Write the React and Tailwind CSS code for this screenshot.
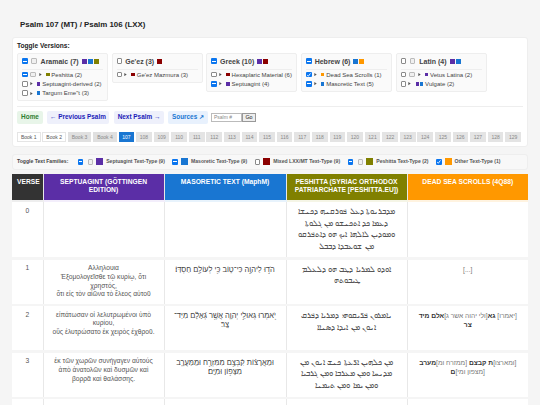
import React from "react";

const PURPLE = "#5b2ea6";
const BLUE = "#1976d2";
const OLIVE = "#808000";
const ORANGE = "#ff9800";
const RED = "#8b0000";

function Check({ state }) {
  if (state === "mixed") {
    return (
      <span className="flex h-[5.6px] w-[5.6px] shrink-0 items-center justify-center rounded-[1px] bg-[#0b76ef]">
        <span className="h-px w-[3.6px] bg-white" />
      </span>
    );
  }
  if (state === "on") {
    return (
      <span className="flex h-[5.6px] w-[5.6px] shrink-0 items-center justify-center rounded-[1px] bg-[#0b76ef]">
        <svg viewBox="0 0 10 10" className="h-[5.6px] w-[5.6px]">
          <path d="M2 5.5 L4.2 7.5 L8 2.5" fill="none" stroke="#fff" strokeWidth="1.6" />
        </svg>
      </span>
    );
  }
  return <span className="h-[5.6px] w-[5.6px] shrink-0 rounded-[1px] border-[0.7px] border-[#8a8a8a] bg-white" />;
}

function GhostBox({ className }) {
  return <span className={`h-[5.6px] w-[5.6px] shrink-0 rounded-[1px] border-[0.7px] border-[#bbbbbb] bg-[#f0f0f0] ${className}`} />;
}

function VersionRow({ check, ghost, colors, label }) {
  return (
    <div className="flex h-[9.3px] items-center whitespace-nowrap">
      <Check state={check} />
      {ghost && <GhostBox className="ml-[2.6px] mr-[1px]" />}
      <svg viewBox="0 0 3 4" className="ml-[2px] mr-[4.2px] h-[3.2px] w-[3px] shrink-0">
        <path d="M0 0 L3 2 L0 4 Z" fill="#555" />
      </svg>
      <span className="flex gap-[0.6px]">
        {colors.map((c) => (
          <span key={c} className="h-[3.6px] w-[3.6px] shrink-0" style={{ backgroundColor: c }} />
        ))}
      </span>
      <span className="ml-[1.8px] text-[6px] font-medium leading-none text-[#444]">{label}</span>
    </div>
  );
}

function VersionCard({ check, ghost, title, colors, rows }) {
  return (
    <div className="w-[91px] rounded-[2px] border border-[#eeeeee] bg-[#fafafa] px-[4px] pb-[2.6px] pt-[2.5px]">
      <div className="flex h-[9px] items-center whitespace-nowrap">
        <Check state={check} />
        {ghost && <GhostBox className="ml-[3.4px] mr-[1px]" />}
        <span className="ml-[3px] text-[7px] font-bold leading-none text-[#444]">{title}</span>
        <span className="ml-[3px] flex items-center gap-[1px]">
          {colors.map((c) => (
            <span key={c} className="h-[5px] w-[5px] shrink-0" style={{ backgroundColor: c }} />
          ))}
        </span>
      </div>
      <div className="mt-[3px] border-t border-[#eeeeee] pt-[0.5px]">
        {rows.map((r) => (
          <VersionRow key={r.label} {...r} />
        ))}
      </div>
    </div>
  );
}

const cards = [
  {
    check: "mixed", ghost: true, title: "Aramaic (7)", colors: [PURPLE, BLUE, OLIVE],
    rows: [
      { check: "mixed", ghost: true, colors: [OLIVE], label: "Peshitta (2)" },
      { check: "off", colors: [PURPLE], label: "Septuagint-derived (2)" },
      { check: "off", colors: [BLUE], label: "Targum Eme\"t (3)" },
    ],
  },
  {
    check: "off", title: "Ge'ez (3)", colors: [RED],
    rows: [{ check: "off", colors: [RED], label: "Ge'ez Mazmura (3)" }],
  },
  {
    check: "mixed", title: "Greek (10)", colors: [PURPLE, RED],
    rows: [
      { check: "off", colors: [RED], label: "Hexaplaric Material (6)" },
      { check: "mixed", colors: [PURPLE], label: "Septuagint (4)" },
    ],
  },
  {
    check: "mixed", title: "Hebrew (6)", colors: [BLUE, ORANGE],
    rows: [
      { check: "on", colors: [ORANGE], label: "Dead Sea Scrolls (1)" },
      { check: "mixed", colors: [BLUE], label: "Masoretic Text (5)" },
    ],
  },
  {
    check: "off", ghost: true, title: "Latin (4)", colors: [PURPLE, BLUE],
    rows: [
      { check: "off", ghost: true, colors: [PURPLE], label: "Vetus Latina (2)" },
      { check: "off", colors: [PURPLE, BLUE], label: "Vulgate (2)" },
    ],
  },
];

const psalms = Array.from({ length: 22 }, (_, i) => 108 + i);

const families = [
  { check: "mixed", ghost: true, color: PURPLE, label: "Septuagint Text-Type (9)" },
  { check: "mixed", color: BLUE, label: "Masoretic Text-Type (9)" },
  { check: "off", color: RED, label: "Mixed LXX/MT Text-Type (9)" },
  { check: "mixed", ghost: true, color: OLIVE, label: "Peshitta Text-Type (2)" },
  { check: "on", color: ORANGE, label: "Other Text-Type (1)" },
];

const heads = [
  { label: "VERSE", bg: "bg-[#333333]", tint: "bg-[#eeeeee]" },
  { label: "SEPTUAGINT (GÖTTINGEN EDITION)", bg: "bg-[#5b2ea6]", tint: "bg-[#f3eefb]" },
  { label: "MASORETIC TEXT (MaphM)", bg: "bg-[#1976d2]", tint: "bg-[#e8f3fc]" },
  { label: "PESHITTA (SYRIAC ORTHODOX PATRIARCHATE [PESHITTA.EU])", bg: "bg-[#808000]", tint: "bg-[#f5f5e6]" },
  { label: "DEAD SEA SCROLLS (4Q88)", bg: "bg-[#ff9800]", tint: "bg-[#fff3e0]" },
];

const rows = [
  {
    verse: "0", h: "h-[55px]", lxx: [], mt: "",
    syr: "ܡܕܒܪܢܘܬܐ ܕܥܠ ܦܘܪܩܢܗ ܕܟܢܫܐ ܕܥܡܐ ܟܕ ܐܬܟܢܫܘ ܡܢ ܓܠܘܬܐ ܘܡܘܕܝܢ ܠܐܠܗܐ ܐܝܟ ܗܘ ܕܐܬܦܪܩܘ ܡܢ ܫܘܥܒܕܐ ܕܒܒܠ",
    dss: null,
  },
  {
    verse: "1", h: "h-[44px]",
    lxx: ["Αλληλουια", "Ἐξομολογεῖσθε τῷ κυρίῳ, ὅτι χρηστός,", "ὅτι εἰς τὸν αἰῶνα τὸ ἔλεος αὐτοῦ"],
    mt: "הֹד֣וּ לַיהוָ֣ה כִּי־ט֑וֹב כִּ֖י לְעוֹלָ֣ם חַסְדּֽוֹ׃",
    syr: "ܐܘܕܘ ܠܡܪܝܐ ܕܛܒ ܗܘ ܕܠܥܠܡ ܛܝܒܘܬܗ",
    dss: <span className="text-[#777]">[...]</span>,
  },
  {
    verse: "2", h: "h-[44px]",
    lxx: ["εἰπάτωσαν οἱ λελυτρωμένοι ὑπὸ κυρίου,", "οὓς ἐλυτρώσατο ἐκ χειρὸς ἐχθροῦ."],
    mt: "יֹ֭אמְרוּ גְּאוּלֵ֣י יְהוָ֑ה אֲשֶׁ֥ר גְּ֝אָלָ֗ם מִיַּד־\nצָֽר׃",
    syr: "ܢܐܡܪܘܢ ܦܪ̈ܝܩܘܗܝ ܕܡܪܝܐ ܕܦܪܩ ܐܢܘܢ ܡܢ ܐܝܕܐ ܕܣܢܐܐ",
    dss: (
      <>
        <span className="text-[#777]">[יאמרו] </span>
        <b>גא</b>
        <span className="text-[#777]">[ולי יהוה אשר ג]</span>
        <b>אלם מיד צר</b>
      </>
    ),
  },
  {
    verse: "3", h: "h-[44px]",
    lxx: ["ἐκ τῶν χωρῶν συνήγαγεν αὐτούς", "ἀπὸ ἀνατολῶν καὶ δυσμῶν καὶ", "βορρᾶ καὶ θαλάσσης."],
    mt: "וּמֵאֲרָצ֗וֹת קִ֫בְּצָ֥ם מִמִּזְרָ֥ח וּמִֽמַּעֲרָ֑ב מִצָּפ֥וֹן וּמִיָּֽם׃",
    syr: "ܡܢ ܟܠܗܝܢ ܐܪ̈ܥܬܐ ܟܢܫ ܐܢܘܢ ܡܢ ܡܕܢܚܐ ܘܡܢ ܡܥܪܒܐ ܘܡܢ ܓܪܒܝܐ ܘܡܢ ܝܡܐ ܘܡܢ ܬܝܡܢܐ",
    dss: (
      <>
        <span className="text-[#777]">[ומארצו]</span>
        <b>ת קבצם </b>
        <span className="text-[#777]">[ממזרח ומ]</span>
        <b>מערב </b>
        <span className="text-[#777]">[מצפון ומי]</span>
        <b>ם</b>
      </>
    ),
  },
];

const COLS = "grid grid-cols-[31.5px_121px_122px_121px_120.5px]";
const CELL_LINE = "border-r-[1.5px] border-[#e8e8e8]";
const NAV_BTN = "flex h-[13px] items-center justify-center rounded-[2px] text-[6.4px] font-bold leading-none";

export default function App() {
  return (
    <div className="h-[405px] w-[540px] overflow-hidden bg-[#f5f5f5] px-[12px] font-['Liberation_Sans','Noto_Sans',sans-serif]">
      <h1 className="pb-[7px] pl-[8px] pt-[19px] text-[7.9px] font-bold leading-[11px] text-[#222]">
        Psalm 107 (MT) / Psalm 106 (LXX)
      </h1>

      <div className="h-[110px] w-[515.5px] overflow-hidden rounded-[3px] border border-[#eeeeee] bg-white px-[4px] pt-[3px]">
        <div className="text-[6.6px] font-bold leading-[9px] text-[#222]">Toggle Versions:</div>
        <div className="mt-[3px] flex h-[53px] items-start gap-[3.7px]">
          {cards.map((c) => (
            <VersionCard key={c.title} {...c} />
          ))}
        </div>
        <div className="border-t border-[#eeeeee]" />

        <div className="mt-[4px] flex h-[13px] items-center whitespace-nowrap">
          <span className={`${NAV_BTN} w-[26px] bg-[#e8f5e9] text-[#2e7d32]`}>Home</span>
          <span className={`${NAV_BTN} ml-[4px] w-[62px] bg-[#eef0fb] text-[#1a1ab8]`}>← Previous Psalm</span>
          <span className={`${NAV_BTN} ml-[5px] w-[50px] bg-[#eef0fb] text-[#1a1ab8]`}>Next Psalm →</span>
          <span className={`${NAV_BTN} ml-[4px] w-[40px] bg-[#e8f1fd] text-[#1976d2]`}>Sources ↗</span>
          <span className="ml-[3px] flex h-[8.5px] w-[31px] items-center border-[0.7px] border-[#bbbbbb] bg-white pl-[2px] text-[5px] leading-none text-[#888]">Psalm #</span>
          <span className="flex h-[8.5px] w-[14px] items-center justify-center border-[0.7px] border-[#999] bg-[#eeeeee] text-[5.4px] font-medium leading-none text-[#222]">Go</span>
        </div>

        <div className="mt-[8px] flex h-[10px] gap-[1.9px] overflow-hidden whitespace-nowrap text-[5px] leading-none text-[#555]">
          <span className="flex w-[23.5px] shrink-0 items-center justify-center border-[0.7px] border-[#e5e5e5] bg-white">Book 1</span>
          <span className="flex w-[23.5px] shrink-0 items-center justify-center border-[0.7px] border-[#e5e5e5] bg-white">Book 2</span>
          <span className="flex w-[23.5px] shrink-0 items-center justify-center bg-[#e0e0e0] text-[#888]">Book 3</span>
          <span className="flex w-[23.5px] shrink-0 items-center justify-center bg-[#e0e0e0] text-[#888]">Book 4</span>
          <span className="flex w-[15.7px] shrink-0 items-center justify-center bg-[#1976d2] text-white">107</span>
          {psalms.map((p) => (
            <span key={p} className="flex w-[15.7px] shrink-0 items-center justify-center bg-[#e4e4e4] text-[#888]">
              {p}
            </span>
          ))}
          <span className="w-[15.7px] shrink-0 bg-[#e4e4e4]" />
        </div>
      </div>

      <div className="mt-[7px] flex h-[15.5px] w-[515.5px] items-center rounded-[3px] border border-[#eeeeee] bg-[#f8f8f8] pl-[4px] whitespace-nowrap">
        <span className="w-[60.5px] shrink-0 text-[5.1px] font-bold leading-none text-[#444]">Toggle Text Families:</span>
        {families.map((f) => (
          <div key={f.label} className="mr-[7.5px] flex items-center gap-[3px]">
            <Check state={f.check} />
            {f.ghost && <GhostBox className="ml-[1.5px]" />}
            <span className="h-[7px] w-[7px] shrink-0" style={{ backgroundColor: f.color }} />
            <span className="text-[5.1px] font-bold leading-none text-[#555]">{f.label}</span>
          </div>
        ))}
      </div>

      <div className="mt-[4.5px] w-[516px]">
        <div className={`${COLS} h-[26px]`}>
          {heads.map((h) => (
            <div
              key={h.label}
              className={`${h.bg} border-r-[0.7px] border-[#e8e8e8] px-[5px] pt-[4px] text-center text-[6.7px] font-bold leading-[8px] text-white last:border-r-0`}
            >
              {h.label}
            </div>
          ))}
        </div>
        <div className={`${COLS} h-[2px]`}>
          {heads.map((h) => (
            <div key={h.label} className={h.tint} />
          ))}
        </div>
        <div className="flex flex-col gap-[2.6px]">
          {rows.map((r) => (
            <div key={r.verse} className={`${COLS} ${r.h} bg-white text-center text-[6.7px] leading-[8.8px] text-[#555]`}>
              <div className={`${CELL_LINE} pt-[4.5px]`}>{r.verse}</div>
              <div className={`${CELL_LINE} px-[8px] pt-[4.5px]`}>
                {r.lxx.map((l) => (
                  <div key={l}>{l}</div>
                ))}
              </div>
              <div dir="rtl" className={`${CELL_LINE} whitespace-pre-line px-[5px] pt-[5px] text-[7.5px] leading-[9px] text-[#444]`}>
                {r.mt}
              </div>
              <div dir="rtl" className={`${CELL_LINE} px-[7px] pt-[4px] text-[8px] leading-[11.7px]`}>
                {r.syr}
              </div>
              <div dir="rtl" className="px-[9px] pt-[5px] text-[6.7px] leading-[9px] text-[#333]">
                {r.dss}
              </div>
            </div>
          ))}
          <div className={`${COLS} h-[10px] bg-white`}>
            <div className={CELL_LINE} />
            <div className={CELL_LINE} />
            <div className={CELL_LINE} />
            <div className={CELL_LINE} />
            <div />
          </div>
        </div>
      </div>
    </div>
  );
}
